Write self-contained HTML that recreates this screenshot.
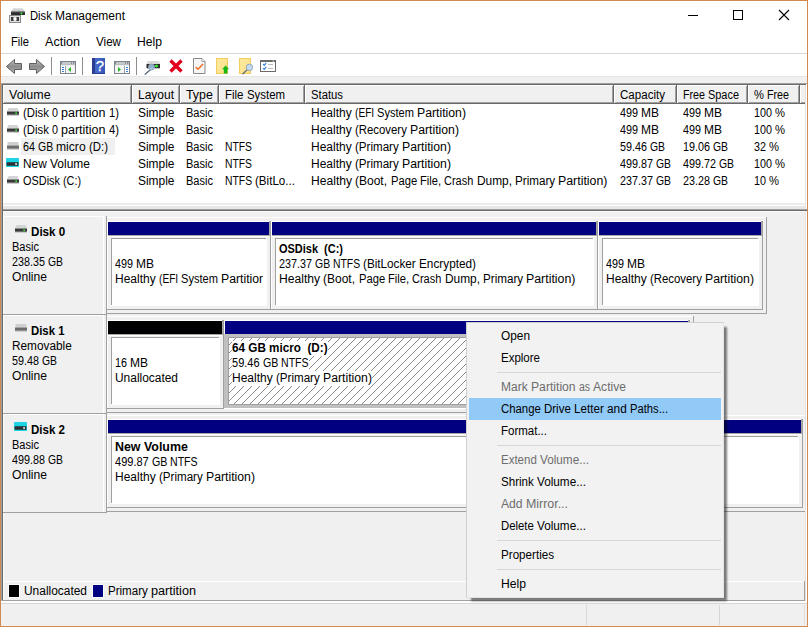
<!DOCTYPE html>
<html><head><meta charset="utf-8"><title>Disk Management</title>
<style>
html,body{margin:0;padding:0;}
body{width:808px;height:627px;overflow:hidden;position:relative;background:#f0f0f0;font-family:"Liberation Sans",sans-serif;font-size:12px;color:#000;}
div,span,svg{position:absolute;box-sizing:border-box;}
.t{white-space:nowrap;line-height:15px;height:15px;}
.w{position:static;display:inline-block;white-space:pre;vertical-align:top;height:15px;transform-origin:0 0;}
.b{font-weight:bold;}
.d{color:#6d6d6d;}
</style></head><body>

<div style="left:1px;top:1px;width:806px;height:52px;background:#fff;"></div>
<div style="left:1px;top:53px;width:806px;height:1px;background:#d9d9d9;"></div>
<div style="left:1px;top:54px;width:806px;height:22px;background:#fff;"></div>
<div style="left:1px;top:76px;width:806px;height:1px;background:#e6e6e6;"></div>
<svg width="0" height="0" style="left:0;top:0"><defs>
<linearGradient id="ga" x1="0" y1="0" x2="0" y2="1"><stop offset="0" stop-color="#c4c4c4"/><stop offset="0.5" stop-color="#8c8c8c"/><stop offset="1" stop-color="#b4b4b4"/></linearGradient>
<linearGradient id="gy" x1="0" y1="0" x2="1" y2="1"><stop offset="0" stop-color="#ffeaa0"/><stop offset="1" stop-color="#ffdf85"/></linearGradient>
<linearGradient id="gb" x1="0" y1="0" x2="1" y2="0"><stop offset="0" stop-color="#4a70d0"/><stop offset="1" stop-color="#3558b8"/></linearGradient>
<linearGradient id="gd" x1="0" y1="0" x2="0" y2="1"><stop offset="0" stop-color="#e4e6e8"/><stop offset="1" stop-color="#b8babc"/></linearGradient>
</defs></svg><svg style="left:8px;top:7px" width="18" height="17" viewBox="0 0 18 17" >
<path d="M5 1h9.5l2.5 4H3z" fill="url(#gd)"/>
<rect x="3" y="5" width="14" height="3" fill="#2e2e2e"/>
<rect x="3" y="4.5" width="14" height="1" fill="#555"/>
<rect x="12.5" y="5.5" width="1.8" height="1.8" fill="#38e838"/>
<rect x="1.5" y="8.5" width="11" height="7" fill="#e0e0e0" stroke="#8c8c8c" stroke-width="1"/>
<rect x="3" y="10" width="2.6" height="4" fill="#3a3a3a"/>
<rect x="8.4" y="10" width="2.6" height="4" fill="#3a3a3a"/>
<rect x="5.6" y="11" width="2.8" height="2" fill="#fff"/>
</svg>
<span class="t " style="left:30px;top:9px;"><span class="w" style="width:25.0px;transform:scaleX(0.9373)">Disk </span><span class="w" style="width:70.0px;transform:scaleX(0.9993)">Management</span></span>
<span class="t " style="left:11px;top:35px;"><span class="w" style="width:18.0px;transform:scaleX(0.9305)">File</span></span>
<span class="t " style="left:45px;top:35px;"><span class="w" style="width:35.0px;transform:scaleX(1.0492)">Action</span></span>
<span class="t " style="left:96px;top:35px;"><span class="w" style="width:25.0px;transform:scaleX(0.9691)">View</span></span>
<span class="t " style="left:137px;top:35px;"><span class="w" style="width:25.0px;transform:scaleX(1.0127)">Help</span></span>
<svg style="left:680px;top:1px" width="127" height="30" viewBox="0 0 127 30">
<path d="M8 14.5h10" stroke="#000" stroke-width="1" fill="none"/>
<rect x="53.5" y="9.5" width="9" height="9" stroke="#000" stroke-width="1" fill="none"/>
<path d="M99 9l10 10M109 9l-10 10" stroke="#000" stroke-width="1.1" fill="none"/>
</svg>
<svg style="left:5px;top:58px" width="18" height="17" viewBox="0 0 18 17" ><path d="M1.5 8.5L9.5 1.5V5.5H16.5V11.5H9.5V15.5Z" fill="url(#ga)" stroke="#606060" stroke-width="1" stroke-linejoin="round"/></svg>
<svg style="left:28px;top:58px" width="18" height="17" viewBox="0 0 18 17" ><path d="M16.5 8.5L8.5 1.5V5.5H1.5V11.5H8.5V15.5Z" fill="url(#ga)" stroke="#606060" stroke-width="1" stroke-linejoin="round"/></svg>
<div style="left:51px;top:57px;width:1px;height:18px;background:#8e8e8e"></div>
<div style="left:82px;top:57px;width:1px;height:18px;background:#8e8e8e"></div>
<div style="left:136px;top:57px;width:1px;height:18px;background:#8e8e8e"></div>
<svg style="left:60px;top:61px" width="16" height="13" viewBox="0 0 16 13" ><rect x="0.5" y="0.5" width="15" height="12" fill="#f4f4f4" stroke="#7c828a"/><rect x="1" y="1" width="14" height="3" fill="#8a9098"/><rect x="2" y="1.5" width="9" height="1" fill="#fff"/><rect x="12" y="1.5" width="1" height="1" fill="#fff"/><rect x="14" y="1.5" width="0.6" height="1" fill="#fff"/><rect x="1" y="3.5" width="14" height="1" fill="#e8e8e8"/><rect x="1" y="5" width="4" height="7" fill="#fff"/><rect x="5" y="5" width="1" height="7" fill="#9aa0a8"/><rect x="2" y="6" width="2" height="1" fill="#3a7ad8"/><rect x="2" y="8" width="2" height="1" fill="#3a7ad8"/><rect x="2" y="10" width="2" height="1" fill="#3a7ad8"/><path d="M11 6v5L8 8.5z" fill="#28b428"/></svg>
<svg style="left:114px;top:61px" width="16" height="13" viewBox="0 0 16 13" ><rect x="0.5" y="0.5" width="15" height="12" fill="#f4f4f4" stroke="#7c828a"/><rect x="1" y="1" width="14" height="3" fill="#8a9098"/><rect x="2" y="1.5" width="9" height="1" fill="#fff"/><rect x="12" y="1.5" width="1" height="1" fill="#fff"/><rect x="14" y="1.5" width="0.6" height="1" fill="#fff"/><rect x="1" y="3.5" width="14" height="1" fill="#e8e8e8"/><rect x="11" y="5" width="4" height="7" fill="#fff"/><rect x="10" y="5" width="1" height="7" fill="#9aa0a8"/><rect x="12" y="6" width="2" height="1" fill="#3a7ad8"/><rect x="12" y="8" width="2" height="1" fill="#3a7ad8"/><rect x="12" y="10" width="2" height="1" fill="#3a7ad8"/><path d="M4 6v5L7 8.5z" fill="#28b428"/></svg>
<svg style="left:92px;top:58px" width="13" height="16" viewBox="0 0 13 16" ><rect width="13" height="16" fill="url(#gb)"/><rect width="3" height="16" fill="#2b3f90"/><rect y="15" width="13" height="1" fill="#2b3f90"/><text x="7.8" y="13" font-family="Liberation Sans,sans-serif" font-size="15" fill="#fff" stroke="#fff" stroke-width="0.3" text-anchor="middle">?</text></svg>
<svg style="left:144px;top:60px" width="17" height="15" viewBox="0 0 17 15" ><path d="M3.5 1h11.5l1 3H2.5z" fill="#d8dadc"/><rect x="2.5" y="4" width="13.5" height="4" fill="#2c2c2c"/><rect x="2.5" y="8" width="13.5" height="0.8" fill="#b0b0b0"/>
<rect x="11" y="5" width="3" height="2" fill="#30e030"/><rect x="12" y="4.5" width="1" height="3" fill="#30e030"/>
<path d="M6 10L1.2 14.2" stroke="#5a6a7a" stroke-width="1.3" stroke-linecap="round"/>
<circle cx="7.5" cy="7" r="3" fill="#a8c8e8" fill-opacity="0.85" stroke="#8aa0b8" stroke-width="0.9"/></svg>
<svg style="left:168px;top:58px" width="16" height="16" viewBox="0 0 16 16" ><path d="M2.5 2.5L13.5 13.5M13.5 2.5L2.5 13.5" stroke="#e2001c" stroke-width="3.4" stroke-linecap="butt"/></svg>
<svg style="left:193px;top:58px" width="13" height="16" viewBox="0 0 13 16" ><path d="M0.5 0.5H9L12 3.5V15.5H0.5Z" fill="#f6f6f6" stroke="#8a8a8a"/><path d="M9 0.5V3.5H12" fill="#fff" stroke="#8a8a8a" stroke-width="0.8"/><path d="M2.6 9l2.4 2.2L10 6" stroke="#f06a20" stroke-width="1.4" fill="none"/></svg>
<svg style="left:216px;top:58px" width="14" height="16" viewBox="0 0 14 16" ><rect x="0.5" y="0.5" width="11" height="15" fill="url(#gy)" stroke="#f2cc5c"/><path d="M9.6 7.4L13.2 11.2H11.4V15.5H7.8V11.2H6Z" fill="#18b818"/></svg>
<svg style="left:239px;top:58px" width="15" height="17" viewBox="0 0 15 17" ><rect x="0.5" y="0.5" width="11" height="15" fill="url(#gy)" stroke="#f2cc5c"/><path d="M8.2 11.6L4 15.8" stroke="#5a6a80" stroke-width="1.3" stroke-linecap="round"/><circle cx="10.4" cy="9.4" r="3.2" fill="#c4dcf0" stroke="#90a4b8" stroke-width="1"/></svg>
<svg style="left:260px;top:60px" width="16" height="12" viewBox="0 0 16 12" ><rect x="0.5" y="0.5" width="15" height="11" fill="#fff" stroke="#6a6a6a"/><rect x="0" y="0" width="16" height="2" fill="#6a6a6a"/><rect x="12.5" y="0.5" width="1.5" height="1" fill="#ddd"/><path d="M3 4l1.2 1.3L6.2 2.8M3 8l1.2 1.3L6.2 6.8" stroke="#2a7ae0" stroke-width="1.1" fill="none"/><path d="M8 4.5h5M8 8.5h5" stroke="#b8b8b8" stroke-width="1"/></svg>
<div style="left:3px;top:85px;width:803px;height:119px;background:#fff;"></div>
<div style="left:1px;top:83px;width:806px;height:1px;background:#a0a0a0;"></div>
<div style="left:2px;top:84px;width:804px;height:1px;background:#696969;"></div>
<div style="left:1px;top:83px;width:1px;height:126px;background:#a0a0a0;"></div>
<div style="left:2px;top:84px;width:1px;height:125px;background:#696969;"></div>
<div style="left:806px;top:84px;width:1px;height:125px;background:#fff;"></div>
<div style="left:805px;top:85px;width:1px;height:124px;background:#e3e3e3;"></div>
<div style="left:3px;top:85px;width:802px;height:19px;background:#f0f0f0;"></div>
<div style="left:3px;top:102px;width:802px;height:1px;background:#a0a0a0;"></div>
<div style="left:3px;top:103px;width:802px;height:1px;background:#696969;"></div>
<div style="left:3px;top:85px;width:129px;height:1px;background:#fff;"></div>
<div style="left:3px;top:85px;width:1px;height:18px;background:#fff;"></div>
<div style="left:130px;top:86px;width:1px;height:17px;background:#a0a0a0;"></div>
<div style="left:131px;top:85px;width:1px;height:19px;background:#696969;"></div>
<span class="t " style="left:9px;top:88px;"><span class="w" style="width:41.6px;transform:scaleX(1.0392)">Volume</span></span>
<div style="left:132px;top:85px;width:48px;height:1px;background:#fff;"></div>
<div style="left:132px;top:85px;width:1px;height:18px;background:#fff;"></div>
<div style="left:178px;top:86px;width:1px;height:17px;background:#a0a0a0;"></div>
<div style="left:179px;top:85px;width:1px;height:19px;background:#696969;"></div>
<span class="t " style="left:138px;top:88px;"><span class="w" style="width:36.0px;transform:scaleX(0.9991)">Layout</span></span>
<div style="left:180px;top:85px;width:39px;height:1px;background:#fff;"></div>
<div style="left:180px;top:85px;width:1px;height:18px;background:#fff;"></div>
<div style="left:217px;top:86px;width:1px;height:17px;background:#a0a0a0;"></div>
<div style="left:218px;top:85px;width:1px;height:19px;background:#696969;"></div>
<span class="t " style="left:186px;top:88px;"><span class="w" style="width:26.8px;transform:scaleX(1.0302)">Type</span></span>
<div style="left:219px;top:85px;width:86px;height:1px;background:#fff;"></div>
<div style="left:219px;top:85px;width:1px;height:18px;background:#fff;"></div>
<div style="left:303px;top:86px;width:1px;height:17px;background:#a0a0a0;"></div>
<div style="left:304px;top:85px;width:1px;height:19px;background:#696969;"></div>
<span class="t " style="left:225px;top:88px;"><span class="w" style="width:21.63px;transform:scaleX(0.9540)">File </span><span class="w" style="width:38.12px;transform:scaleX(0.9526)">System</span></span>
<div style="left:305px;top:85px;width:309px;height:1px;background:#fff;"></div>
<div style="left:305px;top:85px;width:1px;height:18px;background:#fff;"></div>
<div style="left:612px;top:86px;width:1px;height:17px;background:#a0a0a0;"></div>
<div style="left:613px;top:85px;width:1px;height:19px;background:#696969;"></div>
<span class="t " style="left:311px;top:88px;"><span class="w" style="width:32.0px;transform:scaleX(0.9403)">Status</span></span>
<div style="left:614px;top:85px;width:63px;height:1px;background:#fff;"></div>
<div style="left:614px;top:85px;width:1px;height:18px;background:#fff;"></div>
<div style="left:675px;top:86px;width:1px;height:17px;background:#a0a0a0;"></div>
<div style="left:676px;top:85px;width:1px;height:19px;background:#696969;"></div>
<span class="t " style="left:620px;top:88px;"><span class="w" style="width:45.0px;transform:scaleX(0.9639)">Capacity</span></span>
<div style="left:677px;top:85px;width:71px;height:1px;background:#fff;"></div>
<div style="left:677px;top:85px;width:1px;height:18px;background:#fff;"></div>
<div style="left:746px;top:86px;width:1px;height:17px;background:#a0a0a0;"></div>
<div style="left:747px;top:85px;width:1px;height:19px;background:#696969;"></div>
<span class="t " style="left:683px;top:88px;"><span class="w" style="width:25.0px;transform:scaleX(0.8924)">Free </span><span class="w" style="width:31.0px;transform:scaleX(0.9109)">Space</span></span>
<div style="left:748px;top:85px;width:52px;height:1px;background:#fff;"></div>
<div style="left:748px;top:85px;width:1px;height:18px;background:#fff;"></div>
<div style="left:798px;top:86px;width:1px;height:17px;background:#a0a0a0;"></div>
<div style="left:799px;top:85px;width:1px;height:19px;background:#696969;"></div>
<span class="t " style="left:754px;top:88px;"><span class="w" style="width:13.0px;transform:scaleX(0.9275)">% </span><span class="w" style="width:22.0px;transform:scaleX(0.8911)">Free</span></span>
<div style="left:800px;top:85px;width:5px;height:1px;background:#fff;"></div>
<div style="left:800px;top:85px;width:1px;height:18px;background:#fff;"></div>
<svg style="left:7px;top:108px" width="12" height="8" viewBox="0 0 12 8"><path d="M1.5 0h9l1.5 3.5H0z" fill="#d2d4d6"/><rect x="0" y="3.5" width="12" height="3.3" fill="#383838"/><rect x="0" y="6.8" width="12" height="1" fill="#c4c4c4"/><rect x="8.3" y="4.4" width="1.7" height="1.6" fill="#35e035"/></svg>
<span class="t " style="left:23px;top:106px;"><span class="w" style="width:29.0px;transform:scaleX(0.9455)">(Disk </span><span class="w" style="width:9.0px;transform:scaleX(0.8986)">0 </span><span class="w" style="width:48.0px;transform:scaleX(1.0428)">partition </span><span class="w" style="width:10.0px;transform:scaleX(0.9370)">1)</span></span>
<span class="t " style="left:138px;top:106px;"><span class="w" style="width:36.5px;transform:scaleX(0.9949)">Simple</span></span>
<span class="t " style="left:186px;top:106px;"><span class="w" style="width:27.0px;transform:scaleX(0.9201)">Basic</span></span>
<span class="t " style="left:311px;top:106px;"><span class="w" style="width:44.0px;transform:scaleX(0.9993)">Healthy </span><span class="w" style="width:22.0px;transform:scaleX(0.8462)">(EFI </span><span class="w" style="width:40.0px;transform:scaleX(0.9229)">System </span><span class="w" style="width:49.0px;transform:scaleX(1.0202)">Partition)</span></span>
<span class="t " style="left:620px;top:106px;"><span class="w" style="width:21.0px;transform:scaleX(0.8990)">499 </span><span class="w" style="width:18.0px;transform:scaleX(1.0000)">MB</span></span>
<span class="t " style="left:683px;top:106px;"><span class="w" style="width:21.0px;transform:scaleX(0.8990)">499 </span><span class="w" style="width:18.0px;transform:scaleX(1.0000)">MB</span></span>
<span class="t " style="left:754px;top:106px;"><span class="w" style="width:21.0px;transform:scaleX(0.8990)">100 </span><span class="w" style="width:10.0px;transform:scaleX(0.9370)">%</span></span>
<svg style="left:7px;top:125px" width="12" height="8" viewBox="0 0 12 8"><path d="M1.5 0h9l1.5 3.5H0z" fill="#d2d4d6"/><rect x="0" y="3.5" width="12" height="3.3" fill="#383838"/><rect x="0" y="6.8" width="12" height="1" fill="#c4c4c4"/><rect x="8.3" y="4.4" width="1.7" height="1.6" fill="#35e035"/></svg>
<span class="t " style="left:23px;top:123px;"><span class="w" style="width:29.0px;transform:scaleX(0.9455)">(Disk </span><span class="w" style="width:9.0px;transform:scaleX(0.8986)">0 </span><span class="w" style="width:48.0px;transform:scaleX(1.0428)">partition </span><span class="w" style="width:10.0px;transform:scaleX(0.9370)">4)</span></span>
<span class="t " style="left:138px;top:123px;"><span class="w" style="width:36.5px;transform:scaleX(0.9949)">Simple</span></span>
<span class="t " style="left:186px;top:123px;"><span class="w" style="width:27.0px;transform:scaleX(0.9201)">Basic</span></span>
<span class="t " style="left:311px;top:123px;"><span class="w" style="width:44.0px;transform:scaleX(0.9993)">Healthy </span><span class="w" style="width:55.0px;transform:scaleX(0.9480)">(Recovery </span><span class="w" style="width:49.0px;transform:scaleX(1.0202)">Partition)</span></span>
<span class="t " style="left:620px;top:123px;"><span class="w" style="width:21.0px;transform:scaleX(0.8990)">499 </span><span class="w" style="width:18.0px;transform:scaleX(1.0000)">MB</span></span>
<span class="t " style="left:683px;top:123px;"><span class="w" style="width:21.0px;transform:scaleX(0.8990)">499 </span><span class="w" style="width:18.0px;transform:scaleX(1.0000)">MB</span></span>
<span class="t " style="left:754px;top:123px;"><span class="w" style="width:21.0px;transform:scaleX(0.8990)">100 </span><span class="w" style="width:10.0px;transform:scaleX(0.9370)">%</span></span>
<svg style="left:7px;top:142px" width="12" height="8" viewBox="0 0 12 8"><rect x="0.5" y="0" width="11" height="3.5" fill="#cfcfcf"/><rect x="0" y="3.5" width="12" height="3.3" fill="#6c6c6c"/><rect x="0" y="6.8" width="12" height="1" fill="#c8c8c8"/></svg>
<div style="left:21px;top:138px;width:94px;height:17px;background:#f0f0f0;"></div>
<span class="t " style="left:23px;top:140px;"><span class="w" style="width:15.0px;transform:scaleX(0.8989)">64 </span><span class="w" style="width:18.0px;transform:scaleX(0.8707)">GB </span><span class="w" style="width:33.0px;transform:scaleX(1.0100)">micro </span><span class="w" style="width:19.0px;transform:scaleX(0.9500)">(D:)</span></span>
<span class="t " style="left:138px;top:140px;"><span class="w" style="width:36.5px;transform:scaleX(0.9949)">Simple</span></span>
<span class="t " style="left:186px;top:140px;"><span class="w" style="width:27.0px;transform:scaleX(0.9201)">Basic</span></span>
<span class="t " style="left:225px;top:140px;"><span class="w" style="width:27.0px;transform:scaleX(0.8614)">NTFS</span></span>
<span class="t " style="left:311px;top:140px;"><span class="w" style="width:44.0px;transform:scaleX(0.9993)">Healthy </span><span class="w" style="width:47.0px;transform:scaleX(0.9657)">(Primary </span><span class="w" style="width:49.0px;transform:scaleX(1.0202)">Partition)</span></span>
<span class="t " style="left:620px;top:140px;"><span class="w" style="width:30.0px;transform:scaleX(0.8989)">59.46 </span><span class="w" style="width:15.0px;transform:scaleX(0.8649)">GB</span></span>
<span class="t " style="left:683px;top:140px;"><span class="w" style="width:30.0px;transform:scaleX(0.8989)">19.06 </span><span class="w" style="width:15.0px;transform:scaleX(0.8649)">GB</span></span>
<span class="t " style="left:754px;top:140px;"><span class="w" style="width:15.0px;transform:scaleX(0.8989)">32 </span><span class="w" style="width:10.0px;transform:scaleX(0.9370)">%</span></span>
<svg style="left:6px;top:158px" width="13" height="9" viewBox="0 0 13 9"><rect x="0" y="0" width="13" height="9" rx="1" fill="#1cd4e4"/><rect x="0.6" y="4.2" width="11.8" height="3.6" fill="#2a3236"/><rect x="9.2" y="5.2" width="1.8" height="1.6" fill="#f0f0f0"/></svg>
<span class="t " style="left:23px;top:157px;"><span class="w" style="width:27.0px;transform:scaleX(0.9874)">New </span><span class="w" style="width:40.0px;transform:scaleX(0.9992)">Volume</span></span>
<span class="t " style="left:138px;top:157px;"><span class="w" style="width:36.5px;transform:scaleX(0.9949)">Simple</span></span>
<span class="t " style="left:186px;top:157px;"><span class="w" style="width:27.0px;transform:scaleX(0.9201)">Basic</span></span>
<span class="t " style="left:225px;top:157px;"><span class="w" style="width:27.0px;transform:scaleX(0.8614)">NTFS</span></span>
<span class="t " style="left:311px;top:157px;"><span class="w" style="width:44.0px;transform:scaleX(0.9993)">Healthy </span><span class="w" style="width:47.0px;transform:scaleX(0.9657)">(Primary </span><span class="w" style="width:49.0px;transform:scaleX(1.0202)">Partition)</span></span>
<span class="t " style="left:620px;top:157px;"><span class="w" style="width:36.0px;transform:scaleX(0.8989)">499.87 </span><span class="w" style="width:15.0px;transform:scaleX(0.8649)">GB</span></span>
<span class="t " style="left:683px;top:157px;"><span class="w" style="width:36.0px;transform:scaleX(0.8989)">499.72 </span><span class="w" style="width:15.0px;transform:scaleX(0.8649)">GB</span></span>
<span class="t " style="left:754px;top:157px;"><span class="w" style="width:21.0px;transform:scaleX(0.8990)">100 </span><span class="w" style="width:10.0px;transform:scaleX(0.9370)">%</span></span>
<svg style="left:7px;top:176px" width="12" height="8" viewBox="0 0 12 8"><path d="M1.5 0h9l1.5 3.5H0z" fill="#d2d4d6"/><rect x="0" y="3.5" width="12" height="3.3" fill="#383838"/><rect x="0" y="6.8" width="12" height="1" fill="#c4c4c4"/><rect x="8.3" y="4.4" width="1.7" height="1.6" fill="#35e035"/></svg>
<span class="t " style="left:23px;top:174px;"><span class="w" style="width:40.0px;transform:scaleX(0.9088)">OSDisk </span><span class="w" style="width:18.0px;transform:scaleX(0.9000)">(C:)</span></span>
<span class="t " style="left:138px;top:174px;"><span class="w" style="width:36.5px;transform:scaleX(0.9949)">Simple</span></span>
<span class="t " style="left:186px;top:174px;"><span class="w" style="width:27.0px;transform:scaleX(0.9201)">Basic</span></span>
<span class="t " style="left:225px;top:174px;"><span class="w" style="width:30.0px;transform:scaleX(0.8653)">NTFS </span><span class="w" style="width:40.0px;transform:scaleX(0.9671)">(BitLo...</span></span>
<span class="t " style="left:311px;top:174px;"><span class="w" style="width:44.41px;transform:scaleX(1.0086)">Healthy </span><span class="w" style="width:35.33px;transform:scaleX(0.9992)">(Boot, </span><span class="w" style="width:29.27px;transform:scaleX(0.9334)">Page </span><span class="w" style="width:24.22px;transform:scaleX(0.9310)">File, </span><span class="w" style="width:32.3px;transform:scaleX(0.9139)">Crash </span><span class="w" style="width:38.36px;transform:scaleX(0.9915)">Dump, </span><span class="w" style="width:43.4px;transform:scaleX(0.9715)">Primary </span><span class="w" style="width:49.46px;transform:scaleX(1.0297)">Partition)</span></span>
<span class="t " style="left:620px;top:174px;"><span class="w" style="width:36.0px;transform:scaleX(0.8989)">237.37 </span><span class="w" style="width:15.0px;transform:scaleX(0.8649)">GB</span></span>
<span class="t " style="left:683px;top:174px;"><span class="w" style="width:30.0px;transform:scaleX(0.8989)">23.28 </span><span class="w" style="width:15.0px;transform:scaleX(0.8649)">GB</span></span>
<span class="t " style="left:754px;top:174px;"><span class="w" style="width:15.0px;transform:scaleX(0.8989)">10 </span><span class="w" style="width:10.0px;transform:scaleX(0.9370)">%</span></span>
<div style="left:3px;top:203px;width:802px;height:2px;background:#ececec;"></div>
<div style="left:3px;top:205px;width:802px;height:1px;background:#fff;"></div>
<div style="left:3px;top:206px;width:802px;height:3px;background:#e6e6e6;"></div>
<div style="left:1px;top:209px;width:806px;height:1px;background:#a0a0a0;"></div>
<div style="left:2px;top:210px;width:805px;height:1px;background:#696969;"></div>
<div style="left:1px;top:209px;width:1px;height:392px;background:#a0a0a0;"></div>
<div style="left:2px;top:204px;width:1px;height:396px;background:#696969;"></div>
<div style="left:3px;top:211px;width:1px;height:389px;background:#fff;"></div>
<div style="left:805px;top:211px;width:1px;height:390px;background:#e3e3e3;"></div>
<div style="left:806px;top:211px;width:1px;height:391px;background:#fff;"></div>
<div style="left:3px;top:211px;width:802px;height:1px;background:#fff;"></div>
<div style="left:4px;top:216px;width:100px;height:1px;background:#fff;"></div>
<div style="left:103px;top:216px;width:1px;height:98px;background:#fff;"></div>
<div style="left:3px;top:314px;width:103px;height:1px;background:#a0a0a0;"></div>
<div style="left:106px;top:216px;width:1px;height:99px;background:#a0a0a0;"></div>
<svg style="left:15px;top:225px" width="12" height="8" viewBox="0 0 12 8"><path d="M1.5 0h9l1.5 3.5H0z" fill="#d2d4d6"/><rect x="0" y="3.5" width="12" height="3.3" fill="#383838"/><rect x="0" y="6.8" width="12" height="1" fill="#c4c4c4"/><rect x="8.3" y="4.4" width="1.7" height="1.6" fill="#35e035"/></svg>
<span class="t  b" style="left:31px;top:225px;"><span class="w" style="width:34.2px;transform:scaleX(0.9686)">Disk 0</span></span>
<span class="t " style="left:12px;top:240px;"><span class="w" style="width:27.0px;transform:scaleX(0.9201)">Basic</span></span>
<span class="t " style="left:12px;top:255px;"><span class="w" style="width:36.0px;transform:scaleX(0.8989)">238.35 </span><span class="w" style="width:15.0px;transform:scaleX(0.8649)">GB</span></span>
<span class="t " style="left:12px;top:270px;"><span class="w" style="width:35.0px;transform:scaleX(1.0090)">Online</span></span>
<div style="left:107px;top:217px;width:659px;height:1px;background:#fff;"></div>
<div style="left:106px;top:313px;width:661px;height:1px;background:#a0a0a0;"></div>
<div style="left:766px;top:217px;width:1px;height:97px;background:#a0a0a0;"></div>
<div style="left:107px;top:221px;width:162px;height:1px;background:#fff;"></div>
<div style="left:107px;top:221px;width:1px;height:88px;background:#fff;"></div>
<div style="left:269px;top:221px;width:1px;height:15px;background:#a8a8a0;"></div>
<div style="left:270px;top:221px;width:1px;height:89px;background:#a0a0a0;"></div>
<div style="left:107px;top:309px;width:164px;height:1px;background:#a0a0a0;"></div>
<div style="left:108px;top:222px;width:161px;height:13px;background:#000080;"></div>
<div style="left:108px;top:235px;width:162px;height:1px;background:#a8a8a0;"></div>
<div style="left:107px;top:236px;width:162px;height:1px;background:#fff;"></div>
<div style="left:111px;top:238px;width:156px;height:68px;background:#fff;"></div>
<div style="left:111px;top:238px;width:155px;height:1px;background:#a0a0a0;"></div>
<div style="left:111px;top:238px;width:1px;height:67px;background:#a0a0a0;"></div>
<span class="t " style="left:115px;top:257px;width:148px;overflow:hidden;"><span class="w" style="width:21.0px;transform:scaleX(0.8990)">499 </span><span class="w" style="width:18.0px;transform:scaleX(1.0000)">MB</span></span>
<span class="t " style="left:115px;top:272px;width:148px;overflow:hidden;"><span class="w" style="width:44.0px;transform:scaleX(0.9993)">Healthy </span><span class="w" style="width:22.0px;transform:scaleX(0.8462)">(EFI </span><span class="w" style="width:40.0px;transform:scaleX(0.9229)">System </span><span class="w" style="width:49.0px;transform:scaleX(1.0202)">Partition)</span></span>
<div style="left:271px;top:221px;width:325px;height:1px;background:#fff;"></div>
<div style="left:271px;top:221px;width:1px;height:88px;background:#fff;"></div>
<div style="left:596px;top:221px;width:1px;height:15px;background:#a8a8a0;"></div>
<div style="left:597px;top:221px;width:1px;height:89px;background:#a0a0a0;"></div>
<div style="left:271px;top:309px;width:327px;height:1px;background:#a0a0a0;"></div>
<div style="left:272px;top:222px;width:324px;height:13px;background:#000080;"></div>
<div style="left:272px;top:235px;width:325px;height:1px;background:#a8a8a0;"></div>
<div style="left:271px;top:236px;width:325px;height:1px;background:#fff;"></div>
<div style="left:275px;top:238px;width:319px;height:68px;background:#fff;"></div>
<div style="left:275px;top:238px;width:318px;height:1px;background:#a0a0a0;"></div>
<div style="left:275px;top:238px;width:1px;height:67px;background:#a0a0a0;"></div>
<span class="t  b" style="left:279px;top:242px;width:311px;overflow:hidden;"><span class="w" style="width:64.0px;transform:scaleX(0.9141)">OSDisk  (C:)</span></span>
<span class="t " style="left:279px;top:257px;width:311px;overflow:hidden;"><span class="w" style="width:36.0px;transform:scaleX(0.8989)">237.37 </span><span class="w" style="width:18.0px;transform:scaleX(0.8707)">GB </span><span class="w" style="width:30.0px;transform:scaleX(0.8653)">NTFS </span><span class="w" style="width:56.0px;transform:scaleX(0.9763)">(BitLocker </span><span class="w" style="width:57.0px;transform:scaleX(0.9822)">Encrypted)</span></span>
<span class="t " style="left:279px;top:272px;width:311px;overflow:hidden;"><span class="w" style="width:44.41px;transform:scaleX(1.0086)">Healthy </span><span class="w" style="width:35.33px;transform:scaleX(0.9992)">(Boot, </span><span class="w" style="width:29.27px;transform:scaleX(0.9334)">Page </span><span class="w" style="width:24.22px;transform:scaleX(0.9310)">File, </span><span class="w" style="width:32.3px;transform:scaleX(0.9139)">Crash </span><span class="w" style="width:38.36px;transform:scaleX(0.9915)">Dump, </span><span class="w" style="width:43.4px;transform:scaleX(0.9715)">Primary </span><span class="w" style="width:49.46px;transform:scaleX(1.0297)">Partition)</span></span>
<div style="left:598px;top:221px;width:163px;height:1px;background:#fff;"></div>
<div style="left:598px;top:221px;width:1px;height:88px;background:#fff;"></div>
<div style="left:761px;top:221px;width:1px;height:15px;background:#a8a8a0;"></div>
<div style="left:762px;top:221px;width:1px;height:89px;background:#a0a0a0;"></div>
<div style="left:598px;top:309px;width:165px;height:1px;background:#a0a0a0;"></div>
<div style="left:599px;top:222px;width:162px;height:13px;background:#000080;"></div>
<div style="left:599px;top:235px;width:163px;height:1px;background:#a8a8a0;"></div>
<div style="left:598px;top:236px;width:163px;height:1px;background:#fff;"></div>
<div style="left:602px;top:238px;width:157px;height:68px;background:#fff;"></div>
<div style="left:602px;top:238px;width:156px;height:1px;background:#a0a0a0;"></div>
<div style="left:602px;top:238px;width:1px;height:67px;background:#a0a0a0;"></div>
<span class="t " style="left:606px;top:257px;width:149px;overflow:hidden;"><span class="w" style="width:21.0px;transform:scaleX(0.8990)">499 </span><span class="w" style="width:18.0px;transform:scaleX(1.0000)">MB</span></span>
<span class="t " style="left:606px;top:272px;width:149px;overflow:hidden;"><span class="w" style="width:44.0px;transform:scaleX(0.9993)">Healthy </span><span class="w" style="width:55.0px;transform:scaleX(0.9480)">(Recovery </span><span class="w" style="width:49.0px;transform:scaleX(1.0202)">Partition)</span></span>
<div style="left:4px;top:315px;width:100px;height:1px;background:#fff;"></div>
<div style="left:103px;top:315px;width:1px;height:98px;background:#fff;"></div>
<div style="left:3px;top:413px;width:103px;height:1px;background:#a0a0a0;"></div>
<div style="left:106px;top:315px;width:1px;height:99px;background:#a0a0a0;"></div>
<svg style="left:15px;top:324px" width="12" height="8" viewBox="0 0 12 8"><rect x="0.5" y="0" width="11" height="3.5" fill="#cfcfcf"/><rect x="0" y="3.5" width="12" height="3.3" fill="#6c6c6c"/><rect x="0" y="6.8" width="12" height="1" fill="#c8c8c8"/></svg>
<span class="t  b" style="left:31px;top:324px;"><span class="w" style="width:33.5px;transform:scaleX(0.9474)">Disk 1</span></span>
<span class="t " style="left:12px;top:339px;"><span class="w" style="width:59.8px;transform:scaleX(0.9851)">Removable</span></span>
<span class="t " style="left:12px;top:354px;"><span class="w" style="width:30.0px;transform:scaleX(0.8989)">59.48 </span><span class="w" style="width:15.0px;transform:scaleX(0.8649)">GB</span></span>
<span class="t " style="left:12px;top:369px;"><span class="w" style="width:35.0px;transform:scaleX(1.0090)">Online</span></span>
<div style="left:107px;top:316px;width:586px;height:1px;background:#fff;"></div>
<div style="left:106px;top:412px;width:588px;height:1px;background:#a0a0a0;"></div>
<div style="left:693px;top:316px;width:1px;height:97px;background:#a0a0a0;"></div>
<div style="left:107px;top:320px;width:115px;height:1px;background:#fff;"></div>
<div style="left:107px;top:320px;width:1px;height:88px;background:#fff;"></div>
<div style="left:222px;top:320px;width:1px;height:15px;background:#a8a8a0;"></div>
<div style="left:223px;top:320px;width:1px;height:89px;background:#a0a0a0;"></div>
<div style="left:107px;top:408px;width:117px;height:1px;background:#a0a0a0;"></div>
<div style="left:108px;top:321px;width:114px;height:13px;background:#000;"></div>
<div style="left:108px;top:334px;width:115px;height:1px;background:#a8a8a0;"></div>
<div style="left:107px;top:335px;width:115px;height:1px;background:#fff;"></div>
<div style="left:111px;top:337px;width:109px;height:68px;background:#fff;"></div>
<div style="left:111px;top:337px;width:108px;height:1px;background:#a0a0a0;"></div>
<div style="left:111px;top:337px;width:1px;height:67px;background:#a0a0a0;"></div>
<span class="t " style="left:115px;top:356px;width:101px;overflow:hidden;"><span class="w" style="width:15.0px;transform:scaleX(0.8989)">16 </span><span class="w" style="width:18.0px;transform:scaleX(1.0000)">MB</span></span>
<span class="t " style="left:115px;top:371px;width:101px;overflow:hidden;"><span class="w" style="width:63.0px;transform:scaleX(0.9941)">Unallocated</span></span>
<div style="left:224px;top:320px;width:464px;height:1px;background:#fff;"></div>
<div style="left:224px;top:320px;width:1px;height:88px;background:#fff;"></div>
<div style="left:688px;top:320px;width:1px;height:15px;background:#a8a8a0;"></div>
<div style="left:689px;top:320px;width:1px;height:89px;background:#a0a0a0;"></div>
<div style="left:224px;top:408px;width:466px;height:1px;background:#a0a0a0;"></div>
<div style="left:225px;top:321px;width:463px;height:13px;background:#000080;"></div>
<div style="left:225px;top:334px;width:464px;height:1px;background:#a8a8a0;"></div>
<div style="left:224px;top:334px;width:465px;height:74px;background:#c0c0c0;"></div>
<div style="left:224px;top:408px;width:466px;height:1px;background:#fff;"></div>
<div style="left:228px;top:337px;width:458px;height:68px;background:#a0a0a0;"></div>
<svg style="left:229px;top:338px" width="456" height="66" shape-rendering="crispEdges"><defs><pattern id="hp" width="8" height="8" patternUnits="userSpaceOnUse" x="-1" y="0"><g fill="#8a8a8a"><rect x="0" y="7" width="1" height="1"/><rect x="1" y="6" width="1" height="1"/><rect x="2" y="5" width="1" height="1"/><rect x="3" y="4" width="1" height="1"/><rect x="4" y="3" width="1" height="1"/><rect x="5" y="2" width="1" height="1"/><rect x="6" y="1" width="1" height="1"/><rect x="7" y="0" width="1" height="1"/></g></pattern></defs><rect width="456" height="66" fill="#fff"/><rect width="456" height="66" fill="url(#hp)"/></svg>
<span class="t  b" style="left:232px;top:341px;background:#fff;"><span class="w" style="width:95.6px;transform:scaleX(0.9754)">64 GB micro  (D:)</span></span>
<span class="t " style="left:232px;top:356px;background:#fff;"><span class="w" style="width:30.64px;transform:scaleX(0.9181)">59.46 </span><span class="w" style="width:18.38px;transform:scaleX(0.8891)">GB </span><span class="w" style="width:27.58px;transform:scaleX(0.8799)">NTFS</span></span>
<span class="t " style="left:232px;top:371px;background:#fff;"><span class="w" style="width:44.0px;transform:scaleX(0.9993)">Healthy </span><span class="w" style="width:47.0px;transform:scaleX(0.9657)">(Primary </span><span class="w" style="width:49.0px;transform:scaleX(1.0202)">Partition)</span></span>
<div style="left:4px;top:414px;width:100px;height:1px;background:#fff;"></div>
<div style="left:103px;top:414px;width:1px;height:98px;background:#fff;"></div>
<div style="left:3px;top:512px;width:103px;height:1px;background:#a0a0a0;"></div>
<div style="left:106px;top:414px;width:1px;height:99px;background:#a0a0a0;"></div>
<svg style="left:14px;top:422px" width="13" height="9" viewBox="0 0 13 9"><rect x="0" y="0" width="13" height="9" rx="1" fill="#1cd4e4"/><rect x="0.6" y="4.2" width="11.8" height="3.6" fill="#2a3236"/><rect x="9.2" y="5.2" width="1.8" height="1.6" fill="#f0f0f0"/></svg>
<span class="t  b" style="left:31px;top:423px;"><span class="w" style="width:34.0px;transform:scaleX(0.9616)">Disk 2</span></span>
<span class="t " style="left:12px;top:438px;"><span class="w" style="width:27.0px;transform:scaleX(0.9201)">Basic</span></span>
<span class="t " style="left:12px;top:453px;"><span class="w" style="width:36.0px;transform:scaleX(0.8989)">499.88 </span><span class="w" style="width:15.0px;transform:scaleX(0.8649)">GB</span></span>
<span class="t " style="left:12px;top:468px;"><span class="w" style="width:35.0px;transform:scaleX(1.0090)">Online</span></span>
<div style="left:107px;top:415px;width:698px;height:1px;background:#fff;"></div>
<div style="left:106px;top:511px;width:699px;height:1px;background:#a0a0a0;"></div>
<div style="left:107px;top:419px;width:694px;height:1px;background:#fff;"></div>
<div style="left:107px;top:419px;width:1px;height:88px;background:#fff;"></div>
<div style="left:801px;top:419px;width:1px;height:15px;background:#a8a8a0;"></div>
<div style="left:802px;top:419px;width:1px;height:89px;background:#a0a0a0;"></div>
<div style="left:107px;top:507px;width:696px;height:1px;background:#a0a0a0;"></div>
<div style="left:108px;top:420px;width:693px;height:13px;background:#000080;"></div>
<div style="left:108px;top:433px;width:694px;height:1px;background:#a8a8a0;"></div>
<div style="left:107px;top:434px;width:694px;height:1px;background:#fff;"></div>
<div style="left:111px;top:436px;width:688px;height:68px;background:#fff;"></div>
<div style="left:111px;top:436px;width:687px;height:1px;background:#a0a0a0;"></div>
<div style="left:111px;top:436px;width:1px;height:67px;background:#a0a0a0;"></div>
<span class="t  b" style="left:115px;top:440px;width:680px;overflow:hidden;"><span class="w" style="width:72.9px;transform:scaleX(1.0345)">New Volume</span></span>
<span class="t " style="left:115px;top:455px;width:680px;overflow:hidden;"><span class="w" style="width:36.84px;transform:scaleX(0.9199)">499.87 </span><span class="w" style="width:18.42px;transform:scaleX(0.8911)">GB </span><span class="w" style="width:27.63px;transform:scaleX(0.8815)">NTFS</span></span>
<span class="t " style="left:115px;top:470px;width:680px;overflow:hidden;"><span class="w" style="width:44.0px;transform:scaleX(0.9993)">Healthy </span><span class="w" style="width:47.0px;transform:scaleX(0.9657)">(Primary </span><span class="w" style="width:49.0px;transform:scaleX(1.0202)">Partition)</span></span>
<div style="left:3px;top:581px;width:802px;height:1px;background:#fff;"></div>
<div style="left:2px;top:600px;width:803px;height:1px;background:#a0a0a0;"></div>
<div style="left:804px;top:581px;width:1px;height:20px;background:#a0a0a0;"></div>
<div style="left:804px;top:605px;width:1px;height:20px;background:#dcdcdc;"></div>
<div style="left:8px;top:584px;width:12px;height:14px;background:#fff;"></div>
<div style="left:9px;top:585px;width:10px;height:12px;background:#000;"></div>
<span class="t " style="left:24px;top:584px;"><span class="w" style="width:63.0px;transform:scaleX(0.9941)">Unallocated</span></span>
<div style="left:92px;top:584px;width:12px;height:14px;background:#fff;"></div>
<div style="left:93px;top:585px;width:10px;height:12px;background:#000080;"></div>
<span class="t " style="left:108px;top:584px;"><span class="w" style="width:43.0px;transform:scaleX(0.9626)">Primary </span><span class="w" style="width:45.0px;transform:scaleX(1.0538)">partition</span></span>
<div style="left:1px;top:601px;width:806px;height:2px;background:#fff;"></div>
<div style="left:1px;top:603px;width:806px;height:1px;background:#d7d7d7;"></div>
<div style="left:586px;top:605px;width:1px;height:20px;background:#d7d7d7;"></div>
<div style="left:719px;top:605px;width:1px;height:20px;background:#d7d7d7;"></div>
<div style="left:466px;top:322px;width:258px;height:276px;background:#f2f2f2;border:1px solid #d0d0d0;border-right-color:#e4e4e4;border-bottom-color:#e4e4e4;box-shadow:4px 4px 2px -1px rgba(0,0,0,0.5);"></div>
<span class="t " style="left:501px;top:329px;"><span class="w" style="width:29.0px;transform:scaleX(0.9878)">Open</span></span>
<span class="t " style="left:501px;top:351px;"><span class="w" style="width:39.0px;transform:scaleX(0.9585)">Explore</span></span>
<div style="left:497px;top:372px;width:224px;height:1px;background:#d7d7d7;"></div>
<span class="t d" style="left:501px;top:380px;"><span class="w" style="width:30.0px;transform:scaleX(1.0000)">Mark </span><span class="w" style="width:48.0px;transform:scaleX(1.0135)">Partition </span><span class="w" style="width:14.0px;transform:scaleX(0.8741)">as </span><span class="w" style="width:33.0px;transform:scaleX(1.0096)">Active</span></span>
<div style="left:469px;top:398px;width:252px;height:22px;background:#91c9f7;"></div>
<span class="t " style="left:501px;top:402px;"><span class="w" style="width:43.0px;transform:scaleX(0.9477)">Change </span><span class="w" style="width:30.0px;transform:scaleX(0.9571)">Drive </span><span class="w" style="width:33.0px;transform:scaleX(0.9697)">Letter </span><span class="w" style="width:23.0px;transform:scaleX(0.9846)">and </span><span class="w" style="width:38.0px;transform:scaleX(0.9339)">Paths...</span></span>
<span class="t " style="left:501px;top:424px;"><span class="w" style="width:46.0px;transform:scaleX(0.9580)">Format...</span></span>
<div style="left:497px;top:445px;width:224px;height:1px;background:#d7d7d7;"></div>
<span class="t d" style="left:501px;top:453px;"><span class="w" style="width:39.0px;transform:scaleX(0.9582)">Extend </span><span class="w" style="width:49.0px;transform:scaleX(0.9794)">Volume...</span></span>
<span class="t " style="left:501px;top:475px;"><span class="w" style="width:36.0px;transform:scaleX(0.9636)">Shrink </span><span class="w" style="width:49.0px;transform:scaleX(0.9794)">Volume...</span></span>
<span class="t d" style="left:501px;top:497px;"><span class="w" style="width:25.0px;transform:scaleX(1.0127)">Add </span><span class="w" style="width:42.0px;transform:scaleX(1.0327)">Mirror...</span></span>
<span class="t " style="left:501px;top:519px;"><span class="w" style="width:36.0px;transform:scaleX(0.9466)">Delete </span><span class="w" style="width:49.0px;transform:scaleX(0.9794)">Volume...</span></span>
<div style="left:497px;top:540px;width:224px;height:1px;background:#d7d7d7;"></div>
<span class="t " style="left:501px;top:548px;"><span class="w" style="width:53.0px;transform:scaleX(0.9689)">Properties</span></span>
<div style="left:497px;top:569px;width:224px;height:1px;background:#d7d7d7;"></div>
<span class="t " style="left:501px;top:577px;"><span class="w" style="width:25.0px;transform:scaleX(1.0127)">Help</span></span>
<div style="left:0;top:0;width:808px;height:627px;border:1px solid #d18950;"></div>
</body></html>
